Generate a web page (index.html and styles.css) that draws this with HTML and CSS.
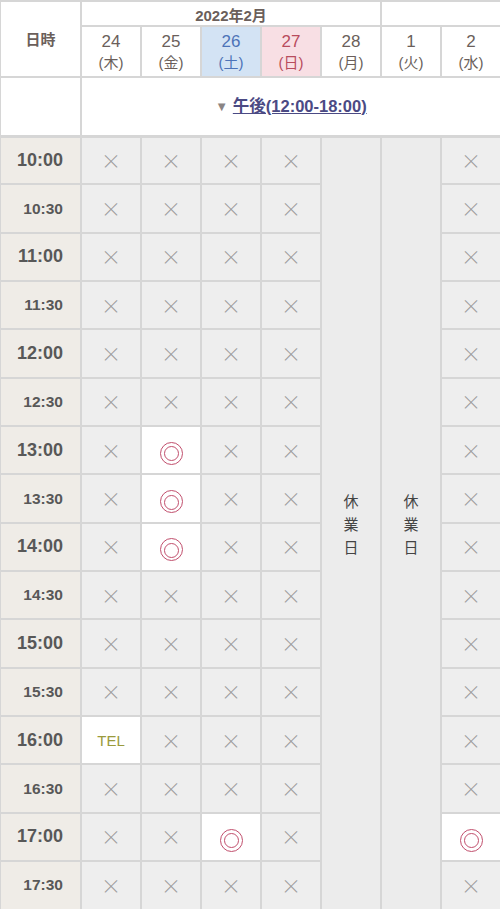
FILE: index.html
```html
<!DOCTYPE html>
<html lang="ja">
<head>
<meta charset="UTF-8">
<meta name="viewport" content="width=device-width,initial-scale=1.0">
<title>予約カレンダー</title>
<link rel="stylesheet" href="styles.css">
</head>
<body>
<!--予約表-->
<table class="cal">
    <colgroup>
        <col class="c-time">
        <col><col><col><col><col><col><col>
    </colgroup>
    <thead>
        <tr class="r-month">
            <th class="head" rowspan="2">日時</th>
            <th class="month" colspan="5">2022年2月</th>
            <th class="month" colspan="2"></th>
        </tr>
        <tr class="r-day">
            <th class="day">24<span>(木)</span></th>
            <th class="day">25<span>(金)</span></th>
            <th class="day sat">26<span>(土)</span></th>
            <th class="day sun">27<span>(日)</span></th>
            <th class="day">28<span>(月)</span></th>
            <th class="day">1<span>(火)</span></th>
            <th class="day">2<span>(水)</span></th>
        </tr>
        <tr class="r-part">
            <th></th>
            <th class="part" colspan="7"><span class="tri">▼</span> <a href="#">午後(12:00-18:00)</a></th>
        </tr>
    </thead>
    <tbody>
        <tr>
            <th class="time">10:00</th>
            <td>×</td><td>×</td><td>×</td><td>×</td>
            <td class="closed" rowspan="16">休<br>業<br>日</td>
            <td class="closed" rowspan="16">休<br>業<br>日</td>
            <td>×</td>
        </tr>
        <tr><th class="time half">10:30</th><td>×</td><td>×</td><td>×</td><td>×</td><td>×</td></tr>
        <tr><th class="time">11:00</th><td>×</td><td>×</td><td>×</td><td>×</td><td>×</td></tr>
        <tr><th class="time half">11:30</th><td>×</td><td>×</td><td>×</td><td>×</td><td>×</td></tr>
        <tr><th class="time">12:00</th><td>×</td><td>×</td><td>×</td><td>×</td><td>×</td></tr>
        <tr><th class="time half">12:30</th><td>×</td><td>×</td><td>×</td><td>×</td><td>×</td></tr>
        <tr><th class="time">13:00</th><td>×</td><td class="ok"><i class="maru"></i></td><td>×</td><td>×</td><td>×</td></tr>
        <tr><th class="time half">13:30</th><td>×</td><td class="ok"><i class="maru"></i></td><td>×</td><td>×</td><td>×</td></tr>
        <tr><th class="time">14:00</th><td>×</td><td class="ok"><i class="maru"></i></td><td>×</td><td>×</td><td>×</td></tr>
        <tr><th class="time half">14:30</th><td>×</td><td>×</td><td>×</td><td>×</td><td>×</td></tr>
        <tr><th class="time">15:00</th><td>×</td><td>×</td><td>×</td><td>×</td><td>×</td></tr>
        <tr><th class="time half">15:30</th><td>×</td><td>×</td><td>×</td><td>×</td><td>×</td></tr>
        <tr><th class="time">16:00</th><td class="ok tel">TEL</td><td>×</td><td>×</td><td>×</td><td>×</td></tr>
        <tr><th class="time half">16:30</th><td>×</td><td>×</td><td>×</td><td>×</td><td>×</td></tr>
        <tr><th class="time">17:00</th><td>×</td><td>×</td><td class="ok"><i class="maru"></i></td><td>×</td><td class="ok"><i class="maru"></i></td></tr>
        <tr><th class="time half">17:30</th><td>×</td><td>×</td><td>×</td><td>×</td><td>×</td></tr>
    </tbody>
</table>
</body>
</html>
```
FILE: styles.css
```css
/*初期化*/
*{
    margin:0;
    padding:0;
    box-sizing:border-box;
}
body{
    background:#fff;
    font-family:"Liberation Sans","Noto Sans CJK JP",sans-serif;
    color:#6b5f5b;
}
/*表全体*/
.cal{
    width:500px;
    table-layout:fixed;
    border-collapse:collapse;
    margin-left:-1px;
}
.cal col{
    width:60px;
}
.cal col.c-time{
    width:81px;
}
.cal th,
.cal td{
    border:2px solid #d6d6d6;
    text-align:center;
    vertical-align:middle;
}
/*見出し*/
.r-month{
    height:25px;
}
.r-day{
    height:51px;
}
.r-part{
    height:59px;
}
.r-part th{
    border-bottom-width:3px;
}
.cal .head{
    font-size:15px;
    font-weight:bold;
    padding-bottom:2px;
}
.cal .month{
    font-size:15px;
    font-weight:bold;
    padding-top:1px;
}
.cal .day{
    font-size:17px;
    font-weight:normal;
    line-height:20px;
    padding-top:2px;
}
.day span{
    display:block;
    font-size:15px;
    line-height:22px;
}
.cal .day.sat{
    background:#d3e3f4;
    color:#4d73b8;
}
.cal .day.sun{
    background:#f8dfe4;
    color:#b84c5d;
}
.cal .part{
    font-size:16.5px;
    font-weight:bold;
    padding-bottom:3px;
}
.part .tri{
    color:#8a8584;
    font-size:13px;
    vertical-align:1px;
    font-weight:normal;
}
.part a{
    color:#4b4a84;
    text-decoration:underline;
}
/*時間帯*/
.cal tbody tr{
    height:48.35px;
}
.cal .time{
    background:#efece7;
    color:#585858;
    font-size:18px;
    font-weight:bold;
    text-align:right;
    padding-right:17px;
}
.cal .time.half{
    font-size:15.5px;
}
.cal td{
    background:#eeeeee;
    color:#9b9b9b;
    font-family:"Noto Sans CJK JP",sans-serif;
    font-size:20px;
    font-weight:300;
}
.cal td.ok{
    background:#fff;
}
.cal td.tel{
    font-family:"Liberation Sans",sans-serif;
    font-size:15px;
    font-weight:normal;
    color:#9a9a3c;
}
.cal td.closed{
    background:#ececec;
    color:#444;
    font-size:15px;
    font-weight:normal;
    line-height:23px;
}
/*◎マーク*/
.maru{
    display:inline-block;
    position:relative;
    width:23px;
    height:23px;
    border:1.6px solid #c14f6d;
    border-radius:50%;
    vertical-align:middle;
}
.maru::after{
    content:"";
    position:absolute;
    left:3.5px;
    top:3.5px;
    width:13px;
    height:13px;
    border:1.6px solid #c14f6d;
    border-radius:50%;
}
```
